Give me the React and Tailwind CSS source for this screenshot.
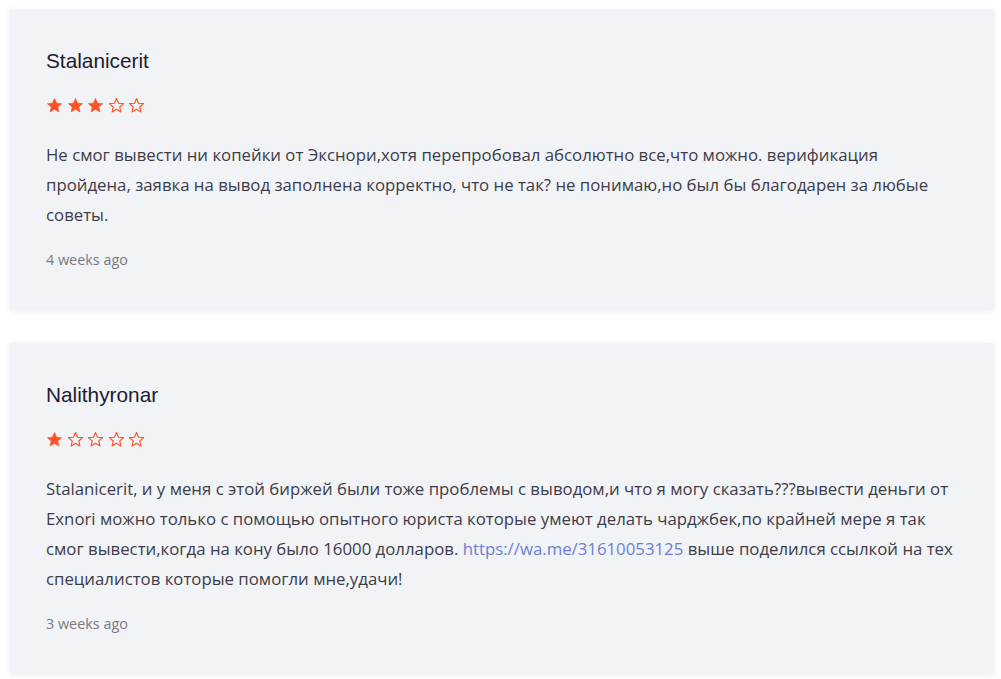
import React from 'react';

const reviews = [
    {
        name: 'Stalanicerit',
        rating: 3,
        text: [
            'Не смог вывести ни копейки от Экснори,хотя перепробовал абсолютно все,что можно. верификация пройдена, заявка на вывод заполнена корректно, что не так? не понимаю,но был бы благодарен за любые советы.',
        ],
        date: '4 weeks ago',
    },
    {
        name: 'Nalithyronar',
        rating: 1,
        text: [
            'Stalanicerit, и у меня с этой биржей были тоже проблемы с выводом,и что я могу сказать???вывести деньги от Exnori можно только с помощью опытного юриста которые умеют делать чарджбек,по крайней мере я так смог вывести,когда на кону было 16000 долларов. ',
            { link: 'https://wa.me/31610053125' },
            ' выше поделился ссылкой на тех специалистов которые помогли мне,удачи!',
        ],
        date: '3 weeks ago',
    },
];

function Star({ filled }) {
    return (
        <svg width="17" height="17" viewBox="0 0 24 24" className="shrink-0">
            <path
                d="M12 2.2l2.9 6.6 7.1.6-5.4 4.7 1.6 7-6.2-3.7-6.2 3.7 1.6-7L2 9.4l7.1-.6z"
                fill={filled ? '#ff5227' : 'none'}
                stroke="#ff5227"
                strokeWidth={filled ? 1 : 1.6}
                strokeLinejoin="round"
            />
        </svg>
    );
}

function ReviewCard({ review }) {
    return (
        <div className="bg-[#f2f3f7] shadow-[0_1px_6px_rgba(0,0,0,0.08)] pl-[36px] pr-[36px] pt-[39px] pb-[40px]">
            <div className="text-[20.8px] leading-[25px] text-[#1c1c2e] font-['Liberation_Sans',Arial,sans-serif]">
                {review.name}
            </div>
            <div className="flex gap-[3.5px] mt-[24px] h-[17px]">
                {[0, 1, 2, 3, 4].map(i => (
                    <Star key={i} filled={i < review.rating} />
                ))}
            </div>
            <p className="mt-[26px] text-[16.8px] leading-[30px] text-[#3d3c48] font-['Open_Sans',sans-serif]">
                {review.text.map((t, i) =>
                    typeof t === 'string' ? (
                        <span key={i}>{t}</span>
                    ) : (
                        <a key={i} href={t.link} className="text-[#6a7fd4]">{t.link}</a>
                    )
                )}
            </p>
            <div className="mt-[20px] text-[14.4px] leading-[20px] text-[#7a7a80] font-['Open_Sans',sans-serif]">
                {review.date}
            </div>
        </div>
    );
}

export default function App() {
    return (
        <div className="bg-white min-h-screen pl-[10px] pr-[7px] pt-[9px] flex flex-col gap-[33px]">
            {reviews.map(r => (
                <ReviewCard key={r.name} review={r} />
            ))}
        </div>
    );
}
